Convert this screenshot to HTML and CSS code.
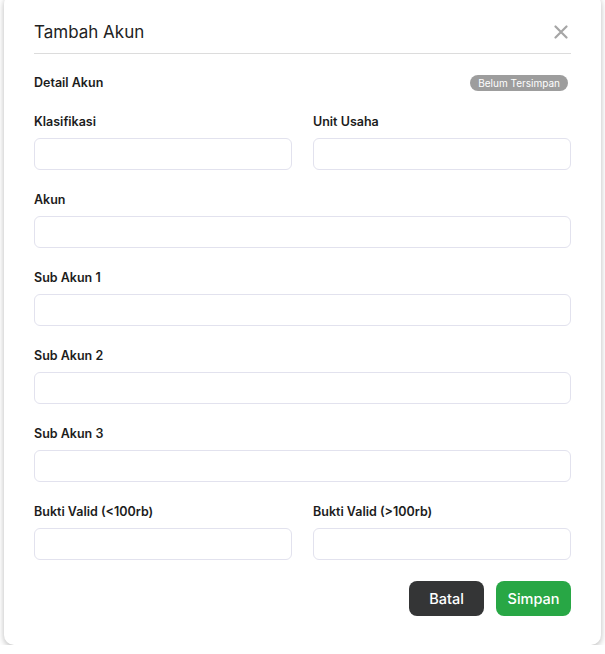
FILE: index.html
```html
<!DOCTYPE html>
<html lang="id">
<head>
<meta charset="utf-8">
<title>Tambah Akun</title>
<link rel="stylesheet" href="styles.css">
</head>
<body>
<div class="modal">
  <div class="modal-header">
    <h1 class="modal-title">Tambah Akun</h1>
    <button class="close" aria-label="Tutup">
      <svg width="14" height="14" viewBox="0 0 14 14"><path d="M1.5 1.5L12.5 12.5M12.5 1.5L1.5 12.5" stroke="#a6a6a6" stroke-width="2.2" stroke-linecap="round"/></svg>
    </button>
  </div>
  <div class="section-head">
    <span class="section-title">Detail Akun</span>
    <span class="badge">Belum Tersimpan</span>
  </div>
  <div class="form">
    <div class="field"><label>Klasifikasi</label><div class="input"></div></div>
    <div class="field"><label>Unit Usaha</label><div class="input"></div></div>
    <div class="field full"><label>Akun</label><div class="input"></div></div>
    <div class="field full"><label>Sub Akun 1</label><div class="input"></div></div>
    <div class="field full"><label>Sub Akun 2</label><div class="input"></div></div>
    <div class="field full"><label>Sub Akun 3</label><div class="input"></div></div>
    <div class="field"><label>Bukti Valid (&lt;100rb)</label><div class="input"></div></div>
    <div class="field"><label>Bukti Valid (&gt;100rb)</label><div class="input"></div></div>
  </div>
  <div class="actions">
    <button class="btn btn-dark">Batal</button>
    <button class="btn btn-green">Simpan</button>
  </div>
</div>
</body>
</html>
```
FILE: styles.css
```css
* { box-sizing: border-box; }
html, body { margin: 0; padding: 0; background: #fff; }
body {
  font-family: "Inter", "Noto Sans", sans-serif;
  color: #1c1c1c;
  padding: 0 4px;
  overflow: hidden;
}
.modal {
  width: 597px;
  height: 651px;
  margin-top: -6px;
  background: #fff;
  border-radius: 10px;
  box-shadow: 0 2px 6px rgba(0,0,0,0.28);
  padding: 26px 30px 0 30px;
}
.modal-header {
  display: flex;
  align-items: center;
  justify-content: space-between;
  padding-bottom: 9px;
  border-bottom: 1px solid #dcdcdc;
}
.modal-title {
  margin: 0;
  font-size: 17px;
  line-height: 24px;
  font-weight: 400;
  color: #222;
}
.close {
  border: 0;
  background: none;
  padding: 0;
  margin-right: 3px;
  display: flex;
  width: 14px;
  height: 14px;
}
.section-head {
  display: flex;
  align-items: center;
  justify-content: space-between;
  margin-top: 19px;
  height: 20px;
}
.section-title {
  font-size: 12.5px;
  font-weight: 600;
  line-height: 20px;
}
.badge {
  background: #9d9d9d;
  color: #fff;
  font-size: 10px;
  line-height: 16px;
  height: 16px;
  padding: 0 8px;
  border-radius: 8px;
  margin-right: 3px;
}
.form {
  display: grid;
  grid-template-columns: 1fr 1fr;
  column-gap: 21px;
  row-gap: 20px;
  margin-top: 19px;
}
.field { display: flex; flex-direction: column; }
.field.full { grid-column: 1 / -1; }
.field label {
  font-size: 12.5px;
  font-weight: 600;
  line-height: 20px;
  margin-bottom: 6px;
}
.input {
  height: 32px;
  border: 1px solid #e2e2ee;
  border-radius: 6px;
  background: #fff;
}
.actions {
  display: flex;
  justify-content: flex-end;
  gap: 12px;
  margin-top: 21px;
}
.btn {
  width: 75px;
  height: 35px;
  border: 0;
  border-radius: 8px;
  color: #fff;
  font-family: inherit;
  font-size: 14.5px;
  font-weight: 500;
}
.btn-dark { background: #343536; }
.btn-green { background: #28a745; }
```
